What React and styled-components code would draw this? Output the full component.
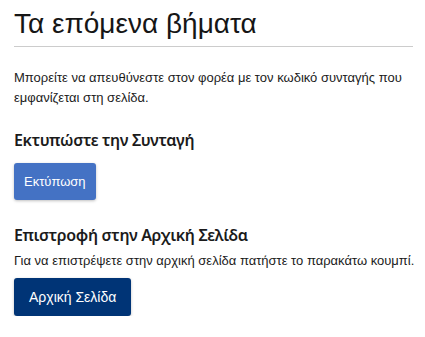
import React from 'react'
import styled, { createGlobalStyle } from 'styled-components'

const GlobalStyle = createGlobalStyle`
  body {
    margin: 0;
    background: #fff;
    font-family: "Liberation Sans", Arial, sans-serif;
    color: #1b1b1b;
  }
`

const Page = styled.div`
  width: 399px;
  padding: 0 12px 0 14px;
`

const Title = styled.h1`
  margin: 7px 0 0;
  padding-bottom: 5px;
  font-family: "Liberation Sans", Arial, sans-serif;
  font-size: 28px;
  font-weight: 400;
  line-height: 1.2;
  color: #161616;
  border-bottom: 1px solid #cccccc;
`

const Text = styled.p`
  margin: ${p => p.$mt || 0}px -8px 0 0;
  font-family: "Liberation Sans", Arial, sans-serif;
  font-size: 13px;
  line-height: 20px;
  color: #1b1b1b;
`

const Heading = styled.h2`
  margin: ${p => p.$mt || 0}px 0 0;
  font-family: "Noto Sans", "Open Sans", sans-serif;
  font-size: 16px;
  font-weight: 600;
  line-height: 24px;
  letter-spacing: -0.35px;
  color: #1b1b1b;
`

const Button = styled.button`
  display: flex;
  align-items: center;
  justify-content: center;
  margin-top: ${p => p.$mt || 0}px;
  height: ${p => p.$h}px;
  padding: 0 ${p => p.$px}px;
  border: none;
  border-radius: 3px;
  background: ${p => p.$bg};
  color: #fff;
  font-family: "Liberation Sans", Arial, sans-serif;
  font-size: ${p => p.$fs}px;
  box-shadow: 0 1px 3px rgba(0, 0, 0, 0.25);
  cursor: pointer;
`

export default function App() {
  return (
    <Page>
      <GlobalStyle />
      <Title>Τα επόμενα βήματα</Title>
      <Text $mt={21}>
        Μπορείτε να απευθύνεστε στον φορέα με τον κωδικό συνταγής που εμφανίζεται στη σελίδα.
      </Text>
      <Heading $mt={20}>Εκτυπώστε την Συνταγή</Heading>
      <Button $mt={11} $h={37} $px={10} $fs={13} $bg="#4472c4">Εκτύπωση</Button>
      <Heading $mt={23}>Επιστροφή στην Αρχική Σελίδα</Heading>
      <Text $mt={4}>
        Για να επιστρέψετε στην αρχική σελίδα πατήστε το παρακάτω κουμπί.
      </Text>
      <Button $mt={7} $h={38} $px={15} $fs={14} $bg="#003476">Αρχική Σελίδα</Button>
    </Page>
  )
}
